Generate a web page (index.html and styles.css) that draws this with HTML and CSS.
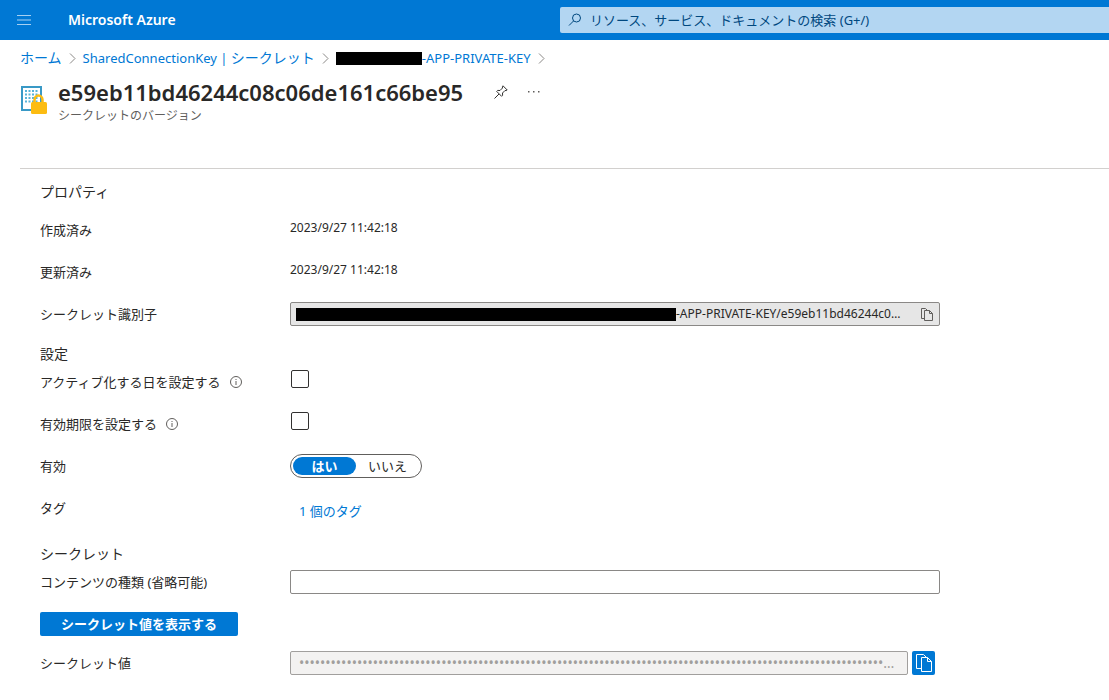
FILE: index.html
```html
<!DOCTYPE html>
<html lang="ja">

<head>
    <meta charset="UTF-8">
    <meta name="viewport" content="width=device-width, initial-scale=1.0">
    <title>シークレットのバージョン - Microsoft Azure</title>
    <link rel="stylesheet" href="styles.css">
</head>

<body>
    <header class="topbar">
        <button class="menu-btn" type="button" aria-label="メニュー">
            <svg width="14" height="10" viewBox="0 0 14 10" stroke="currentColor">
                <path d="M0 .5h14M0 5h14M0 9.5h14" />
            </svg>
        </button>
        <a class="brand" href="#">Microsoft Azure</a>
        <div class="search">
            <svg width="14" height="14" viewBox="0 0 14 14" fill="none" stroke="currentColor">
                <circle cx="8.5" cy="5" r="4" />
                <path d="M5.5 8L1 12.5" />
            </svg>
            <input class="search-input" type="text" aria-label="検索" placeholder="リソース、サービス、ドキュメントの検索 (G+/)">
        </div>
    </header>

    <nav class="breadcrumb">
        <a href="#">ホーム</a>
        <svg class="chevron" width="7" height="11" viewBox="0 0 7 11"><path d="M1 .5l5 5-5 5" /></svg>
        <a href="#"><span class="latin">SharedConnectionKey | </span>シークレット</a>
        <svg class="chevron" width="7" height="11" viewBox="0 0 7 11"><path d="M1 .5l5 5-5 5" /></svg>
        <a class="crumb-key" href="#"><span class="mask"></span>-APP-PRIVATE-KEY</a>
        <svg class="chevron" width="7" height="11" viewBox="0 0 7 11"><path d="M1 .5l5 5-5 5" /></svg>
    </nav>

    <div class="title-bar">
        <svg class="title-icon" width="28" height="30" viewBox="0 0 28 30">
            <path fill="#fff" stroke="#3999c6" stroke-width="2" d="M2 2h19v23H2z" />
            <path stroke="#59b4d9" stroke-width="2" stroke-dasharray="2 1.5" d="M5 6h13M5 9.5h13M5 13h13M5 16.500h13" />
            <path fill="none" stroke="#fcbc12" stroke-width="2.500" d="M14.500 18v-3a4 4.500 0 0 1 8 0v3" />
            <rect x="11" y="17" width="16" height="12" rx="1.500" fill="#fcbc12" />
        </svg>
        <div class="title-text">
            <div class="title-line">
                <h1>e59eb11bd46244c08c06de161c66be95</h1>
                <button class="icon-btn" type="button" aria-label="ピン留め">
                    <svg width="14" height="14" viewBox="0 0 14 14" fill="none" stroke="#323130">
                        <path d="M9 .8L13.200 5l-1 .6-1.200-.1-2.500 2.500.1 2.300-1 1L2.700 6.400l1-1 2.300.1L8.500 3l-.1-1.200zM5 9L.5 13.500" />
                    </svg>
                </button>
                <button class="icon-btn" type="button" aria-label="その他">
                    <svg width="12" height="2" viewBox="0 0 12 2" fill="#605e5c">
                        <path d="M0 0h1.500v1.500H0zM5 0h1.500v1.500H5zM10 0h1.500v1.500H10z" />
                    </svg>
                </button>
            </div>
            <p class="subtitle">シークレットのバージョン</p>
        </div>
    </div>

    <main class="content">
        <section class="group">
            <h2 class="props-heading">プロパティ</h2>
            <div class="row">
                <span>作成済み</span>
                <span class="date">2023/9/27 11:42:18</span>
            </div>
            <div class="row">
                <span>更新済み</span>
                <span class="date">2023/9/27 11:42:18</span>
            </div>
            <div class="row">
                <label for="identifier">シークレット識別子</label>
                <div class="box identifier">
                    <span class="mask"></span>
                    <input id="identifier" type="text" readonly value="-APP-PRIVATE-KEY/e59eb11bd46244c08c06de161c66be95">
                    <button class="copy-plain" type="button" aria-label="コピー">
                        <svg width="12" height="13" viewBox="0 0 12 13" fill="none" stroke="currentColor">
                            <path d="M3.500 10.500h-3V.5h4l2 2M3.500 2.500h5l3 3v7h-8zM8.500 2.500v3h3" />
                        </svg>
                    </button>
                </div>
            </div>
        </section>

        <section class="group settings">
            <h2>設定</h2>
            <div class="row">
                <label for="activation">アクティブ化する日を設定する
                    <svg class="info" width="12" height="12" viewBox="0 0 12 12"><circle cx="6" cy="6" r="5.500" /><path d="M6 5v4M6 3v1" /></svg>
                </label>
                <input class="check" id="activation" type="checkbox">
            </div>
            <div class="row">
                <label for="expiration">有効期限を設定する
                    <svg class="info" width="12" height="12" viewBox="0 0 12 12"><circle cx="6" cy="6" r="5.500" /><path d="M6 5v4M6 3v1" /></svg>
                </label>
                <input class="check" id="expiration" type="checkbox">
            </div>
            <div class="row">
                <span>有効</span>
                <div class="toggle" role="radiogroup" aria-label="有効">
                    <label><input type="radio" name="enabled" checked><span>はい</span></label>
                    <label><input type="radio" name="enabled"><span>いいえ</span></label>
                </div>
            </div>
            <div class="row">
                <span>タグ</span>
                <a class="tag-link" href="#">1 個のタグ</a>
            </div>
        </section>

        <section class="group">
            <h2>シークレット</h2>
            <div class="row">
                <label for="content-type">コンテンツの種類 (省略可能)</label>
                <input class="box" id="content-type" type="text">
            </div>
            <button class="primary-btn" type="button">シークレット値を表示する</button>
            <div class="row">
                <label for="secret">シークレット値</label>
                <div class="secret">
                    <input class="box" id="secret" type="text" readonly value="••••••••••••••••••••••••••••••••••••••••••••••••••••••••••••••••••••••••••••••••••••••••••••••••••••••••••••••••••••••••••••••••••••••••••••">
                    <button class="copy-btn" type="button" aria-label="コピー">
                        <svg width="16" height="18" viewBox="0 0 16 18" fill="none" stroke="currentColor">
                            <path d="M5.500 14.500h-5V.5h7l3 3M5.500 3.500h6l4 4v10h-10zM11.500 3.500v4h4" />
                        </svg>
                    </button>
                </div>
            </div>
        </section>
    </main>
</body>

</html>
```
FILE: styles.css
```css
* {
    box-sizing: border-box;
    margin: 0;
    padding: 0;
}

body {
    background: #fff;
    color: #292827;
    font: 13px/20px "Noto Sans", "Noto Sans CJK JP", sans-serif;
}

a {
    color: #0078d4;
    text-decoration: none;
}

button,
input {
    font: inherit;
    color: inherit;
}

button {
    border: 0;
    background: none;
    cursor: pointer;
}

svg {
    display: block;
    flex: none;
}

.latin {
    font-size: 13px;
    white-space: pre;
}

.mask {
    flex: none;
    background: #000;
}

/* 上部バー */
.topbar {
    display: flex;
    align-items: center;
    height: 40px;
    background: #0078d4;
}

.menu-btn {
    display: flex;
    justify-content: center;
    width: 48px;
    color: #a6d0f2;
}

.brand {
    width: 512px;
    padding-left: 20px;
    color: #fff;
    font-size: 14px;
    font-weight: 600;
}

.search {
    flex: 1;
    display: flex;
    align-items: center;
    gap: 8px;
    height: 26px;
    padding-left: 8px;
    border-radius: 2px 0 0 2px;
    background: #b3d6f2;
    color: #00487f;
}

.search-input {
    flex: 1;
    border: 0;
    outline: 0;
    background: none;
}

.search-input::placeholder {
    color: #00487f;
    opacity: 1;
}

/* パンくずリスト */
.breadcrumb {
    display: flex;
    align-items: center;
    gap: 7px;
    height: 36px;
    padding-left: 20px;
    font-size: 14px;
}

.crumb-key {
    display: flex;
    align-items: center;
    font-size: 13px;
}

.crumb-key .mask {
    width: 86px;
    height: 13px;
}

.chevron {
    fill: none;
    stroke: #8a8886;
}

/* タイトル */
.title-bar {
    display: flex;
    gap: 10px;
    height: 92px;
    padding-left: 20px;
}

.title-icon {
    margin-top: 9px;
}

.title-line {
    display: flex;
    align-items: center;
    gap: 20px;
    height: 31px;
}

h1 {
    margin-right: 11px;
    font-size: 22px;
    font-weight: 600;
}

.subtitle {
    color: #605e5c;
    font-size: 12px;
    line-height: 18px;
}

/* 本文 */
.content {
    margin-left: 20px;
    padding: 13px 20px;
    border-top: 1px solid #d2d0ce;
}

.group {
    display: flex;
    flex-direction: column;
    gap: 18px;
    margin-bottom: 18px;
}

.settings {
    margin-bottom: 24px;
}

h2 {
    margin-bottom: -12px;
    font-size: 14px;
    font-weight: 400;
}

.props-heading {
    margin-bottom: -2px;
}

.row {
    display: grid;
    grid-template-columns: 250px minmax(0, 650px);
    height: 24px;
    line-height: 24px;
}

.row > label {
    display: flex;
    align-items: center;
    gap: 9px;
}

.date {
    font-size: 12px;
    line-height: 20px;
}

.box {
    width: 100%;
    height: 24px;
    padding: 0 8px;
    border: 1px solid #8a8886;
    border-radius: 2px;
    background: #fff;
}

.identifier {
    display: flex;
    align-items: center;
    padding: 0 6px 0 5px;
    background: #e6e6e6;
}

.identifier .mask {
    width: 380px;
    height: 13px;
}

.identifier input {
    flex: 1;
    min-width: 0;
    border: 0;
    outline: 0;
    background: none;
    font-size: 12px;
    text-overflow: ellipsis;
}

.copy-plain {
    margin-left: 14px;
    color: #605e5c;
}

.info {
    fill: none;
    stroke: #605e5c;
}

.check {
    appearance: none;
    width: 18px;
    height: 18px;
    margin-left: 1px;
    border: 1px solid #323130;
    border-radius: 2px;
}

.check:checked {
    background: #0078d4;
}

.toggle {
    display: flex;
    width: 132px;
    height: 24px;
    padding: 2px;
    border: 1px solid #605e5c;
    border-radius: 12px;
}

.toggle label {
    position: relative;
    flex: 1;
}

.toggle input {
    position: absolute;
    opacity: 0;
}

.toggle span {
    display: block;
    border-radius: 9px;
    line-height: 18px;
    text-align: center;
}

.toggle input:checked + span {
    background: #0078d4;
    color: #fff;
    font-weight: 600;
}

.tag-link {
    padding-left: 9px;
    line-height: 30px;
}

.primary-btn {
    align-self: flex-start;
    width: 198px;
    height: 24px;
    margin-bottom: -3px;
    border-radius: 2px;
    background: #0078d4;
    color: #fff;
    font-weight: 700;
    line-height: 22px;
}

.secret {
    display: flex;
    gap: 4px;
    padding-right: 5px;
}

.secret .box {
    padding-right: 10px;
    border-color: #a19f9d;
    background: #f3f2f1;
    color: #a19f9d;
    font-size: 14px;
    text-overflow: ellipsis;
}

.copy-btn {
    display: flex;
    flex: none;
    align-items: center;
    justify-content: center;
    width: 23px;
    height: 24px;
    border-radius: 2px;
    background: #0078d4;
    color: #fff;
}
```
